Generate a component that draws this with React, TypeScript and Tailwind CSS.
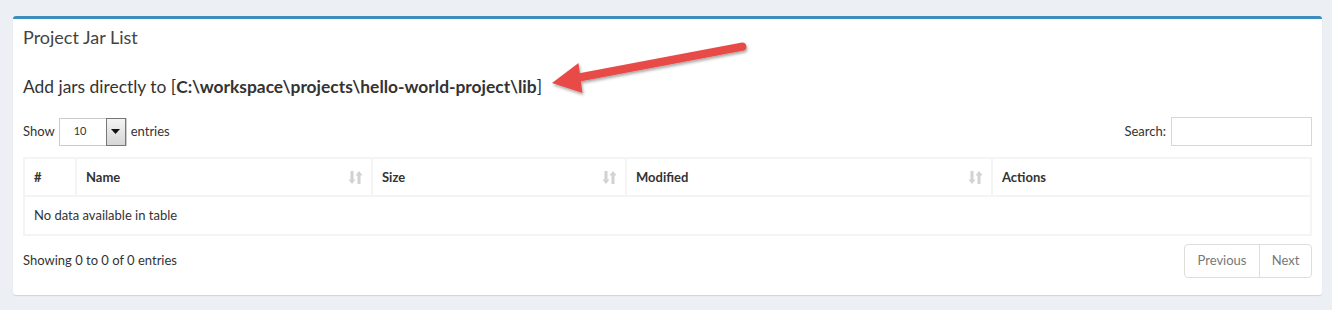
import React from 'react';

const font = { fontFamily: '"Source Sans Pro", Lato, "Liberation Sans", sans-serif' };

const SortIcon: React.FC = () => (
  <svg width="13" height="15" viewBox="0 0 13 15" className="shrink-0">
    <path d="M1.5 1h3v8.5h2L3 14-0.5 9.5h2z" fill="#d2d2d2" />
    <path d="M8.5 14h3V5.5h2L10 1 6.5 5.5h2z" fill="#d2d2d2" />
  </svg>
);

const columns = [
  { label: '#', w: 'w-[52px]', sort: false },
  { label: 'Name', w: 'w-[296px]', sort: true },
  { label: 'Size', w: 'w-[254px]', sort: true },
  { label: 'Modified', w: 'w-[366px]', sort: true },
  { label: 'Actions', w: 'w-[319px]', sort: false },
];

const App: React.FC = () => {
  return (
    <div className="min-h-[310px] bg-[#ecf0f5] pl-[13px] pr-[10px] pt-[16px]" style={font}>
      <div className="relative w-[1309px] rounded-[3px] border-t-[3px] border-[#3c8dbc] bg-white shadow-[0_1px_1px_rgba(0,0,0,0.12)]">
        <div className="px-[10px] pt-[8px] pb-[10px]">
          <h3 className="text-[18px] leading-[21px] text-[#444]">Project Jar List</h3>
        </div>
        <div className="px-[10px] pb-[17px]">
          <h4 className="mt-[18px] mb-[19px] text-[17.4px] leading-[22px] text-[#333]">
            Add jars directly to [<b>C:\workspace\projects\hello-world-project\lib</b>]
          </h4>

          <div className="flex items-center justify-between text-[13px] text-[#333]">
            <div className="flex items-center gap-[4px]">
              <span>Show</span>
              <div className="flex h-[28px] w-[68px] items-stretch border border-[#ccc] bg-white">
                <span className="flex flex-1 items-center pl-[14px] text-[11px] text-[#333]">10</span>
                <span className="my-[-1px] flex w-[20px] items-center justify-center border border-[#777] bg-gradient-to-b from-[#f4f4f4] to-[#d6d6d6]">
                  <svg width="9" height="5" viewBox="0 0 9 5"><path d="M0 0h9L4.5 5z" fill="#111" /></svg>
                </span>
              </div>
              <span>entries</span>
            </div>
            <div className="flex items-center gap-[5px]">
              <span>Search:</span>
              <div className="h-[29px] w-[141px] border border-[#d2d6de] bg-white" />
            </div>
          </div>

          <table className="mt-[11px] table-fixed border-collapse text-[13px] text-[#333]">
            <thead>
              <tr className="h-[38px]">
                {columns.map((c) => (
                  <th key={c.label} className={`${c.w} border-2 border-[#f4f4f4] px-[9px] pt-px text-left font-bold`}>
                    <div className="flex items-center justify-between">
                      <span>{c.label}</span>
                      {c.sort && <SortIcon />}
                    </div>
                  </th>
                ))}
              </tr>
            </thead>
            <tbody>
              <tr className="h-[39px]">
                <td colSpan={5} className="border-2 border-[#f4f4f4] px-[9px]">
                  No data available in table
                </td>
              </tr>
            </tbody>
          </table>

          <div className="mt-[8px] flex items-center justify-between text-[13px] text-[#333]">
            <span>Showing 0 to 0 of 0 entries</span>
            <div className="flex h-[34px] overflow-hidden rounded-[4px] border border-[#ddd] text-[#777]">
              <span className="flex w-[75px] items-center justify-center border-r border-[#ddd]">Previous</span>
              <span className="flex w-[51px] items-center justify-center">Next</span>
            </div>
          </div>
        </div>

        <svg
          className="pointer-events-none absolute left-[514px] top-[15px]"
          width="240"
          height="90"
          viewBox="527 34 240 90"
        >
          <defs>
            <filter id="sh" x="-10%" y="-30%" width="120%" height="160%">
              <feDropShadow dx="1" dy="2" stdDeviation="1.5" floodColor="#000" floodOpacity="0.35" />
            </filter>
          </defs>
          <g filter="url(#sh)" fill="#e84c47">
            <path d="M578 73.5 L742 42.5 A4.2 4.2 0 0 1 744 50.5 L580 81.5 Z" />
            <path d="M552 83 L578.5 63 L582.5 93 Z" />
          </g>
        </svg>
      </div>
    </div>
  );
};

export default App;
